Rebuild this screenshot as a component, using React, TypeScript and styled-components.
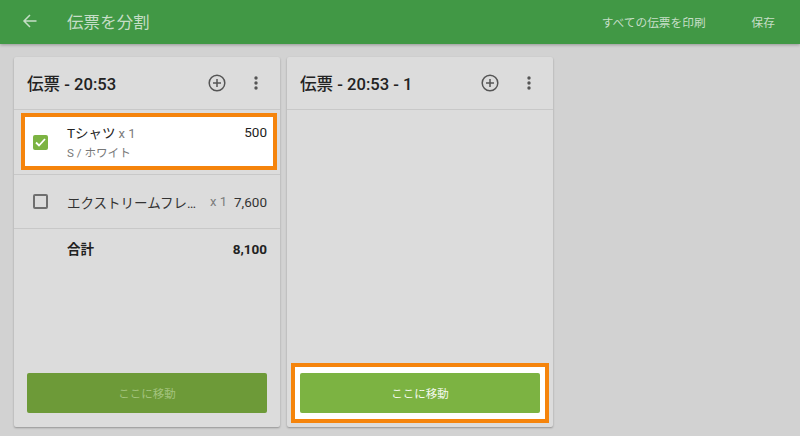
import React from "react";
import styled, { createGlobalStyle } from "styled-components";

const GlobalStyle = createGlobalStyle`
  html, body {
    margin: 0;
    padding: 0;
    background: #d2d2d2;
    font-family: Roboto, "Noto Sans CJK JP", sans-serif;
  }
  * { box-sizing: border-box; }
`;

const Page = styled.div`
  width: 800px;
  height: 436px;
  overflow: hidden;
  background: #d2d2d2;
`;

const TopBar = styled.header`
  height: 44px;
  background: #419845;
  box-shadow: 0 1px 3px rgba(0, 0, 0, 0.28);
  display: flex;
  align-items: center;
  padding: 0 25px 2px 22px;
  color: #c6dec7;
`;

const BackButton = styled.div`
  width: 16px;
  height: 16px;
  display: flex;
  margin-right: 29px;
`;

const PageTitle = styled.div`
  font-size: 16.4px;
  flex: 1;
  letter-spacing: 0.2px;
`;

const BarAction = styled.div`
  font-size: 11.7px;
  margin-left: 46px;
`;

const Columns = styled.main`
  display: flex;
  gap: 7px;
  padding: 13px 0 0 14px;
`;

const Card = styled.section`
  width: 266px;
  height: 370px;
  background: #dcdcdc;
  border-radius: 2px;
  box-shadow: 0 1px 2px rgba(0, 0, 0, 0.3);
  display: flex;
  flex-direction: column;
`;

const CardHeader = styled.div`
  height: 53px;
  flex: none;
  border-bottom: 1px solid #c8c8c8;
  display: flex;
  align-items: center;
  padding: 0 14px 0 13px;
`;

const CardTitle = styled.div`
  flex: 1;
  font-size: 16.6px;
  font-weight: 500;
  color: #222;
`;

const IconSlot = styled.div<{ $gap?: number }>`
  width: 20px;
  height: 20px;
  display: flex;
  align-items: center;
  justify-content: center;
  margin-left: ${(p) => p.$gap ?? 0}px;
`;

const RowFrame = styled.div`
  height: 65px;
  padding: 3px 3px 4px 7px;
  border-bottom: 1px solid #c8c8c8;
`;

const Highlight = styled.div`
  height: 57px;
  border: 4px solid #f5840c;
  background: #fff;
  display: flex;
  align-items: flex-start;
  padding: 2px 6px 0 8px;
`;

const CheckBox = styled.div<{ $checked?: boolean }>`
  width: 15px;
  height: 15px;
  flex: none;
  border-radius: 2px;
  background: ${(p) => (p.$checked ? "#7cb342" : "transparent")};
  border: ${(p) => (p.$checked ? "none" : "2px solid #6f6f6f")};
  display: flex;
  align-items: center;
  justify-content: center;
`;

const CheckSlot = styled.div`
  align-self: center;
  display: flex;
  margin-right: 19px;
`;

const ItemText = styled.div`
  flex: 1;
  min-width: 0;
  padding-top: 4px;
`;

const ItemName = styled.div`
  font-size: 13.5px;
  line-height: 20px;
  color: #222;
  white-space: nowrap;
`;

const Qty = styled.span`
  color: #7c7c7c;
  font-size: 13px;
  margin-left: 3px;
`;

const Variant = styled.div`
  font-size: 11.6px;
  line-height: 16px;
  margin-top: 1px;
  color: #777;
`;

const Price = styled.div`
  font-size: 13.5px;
  line-height: 20px;
  padding-top: 3px;
  color: #222;
`;

const PlainRow = styled.div`
  height: 54px;
  flex: none;
  border-bottom: 1px solid #c8c8c8;
  display: flex;
  align-items: center;
  padding: 0 13px 0 19px;
`;

const PlainName = styled.div`
  flex: 1;
  min-width: 0;
  font-size: 13.5px;
  color: #333;
  white-space: nowrap;
  overflow: hidden;
  text-overflow: ellipsis;
`;

const PlainQty = styled.div`
  color: #7c7c7c;
  font-size: 13px;
  margin: 0 7px 0 13px;
`;

const PlainPrice = styled.div`
  font-size: 13.5px;
  color: #333;
`;

const TotalRow = styled.div`
  display: flex;
  justify-content: space-between;
  padding: 10px 13px 0 53px;
  font-size: 13.5px;
  font-weight: 700;
  line-height: 20px;
  color: #222;
`;

const Spacer = styled.div`
  flex: 1;
`;

const ButtonFrame = styled.div`
  padding: 0 13px 14px;
`;

const MoveButton = styled.div<{ $disabled?: boolean }>`
  height: 40px;
  border-radius: 2px;
  background: ${(p) => (p.$disabled ? "#6d9a38" : "#7cb342")};
  color: ${(p) => (p.$disabled ? "#a3c37d" : "#f4f9ee")};
  font-size: 11.5px;
  display: flex;
  align-items: center;
  justify-content: center;
`;

const ButtonHighlight = styled.div`
  margin: 0 4px 4px;
  height: 60px;
  border: 4px solid #f5840c;
  background: #fff;
  padding: 6px 5px;
`;

const AddIcon = () => (
  <svg width="18" height="18" viewBox="0 0 18 18" fill="none" stroke="#555" strokeWidth="1.5">
    <circle cx="9" cy="9" r="7.8" />
    <path d="M9 5v8M5 9h8" />
  </svg>
);

const MoreIcon = () => (
  <svg width="4" height="14" viewBox="0 0 4 14" fill="#555">
    <circle cx="2" cy="2" r="1.7" />
    <circle cx="2" cy="7" r="1.7" />
    <circle cx="2" cy="12" r="1.7" />
  </svg>
);

const CardActions = () => (
  <>
    <IconSlot>
      <AddIcon />
    </IconSlot>
    <IconSlot $gap={19}>
      <MoreIcon />
    </IconSlot>
  </>
);

const App = () => {
  return (
    <Page>
      <GlobalStyle />
      <TopBar>
        <BackButton>
          <svg width="16" height="16" viewBox="0 0 16 16" fill="none" stroke="#c6dec7" strokeWidth="1.5">
            <path d="M14.5 8H2M8 2L2 8l6 6" />
          </svg>
        </BackButton>
        <PageTitle>伝票を分割</PageTitle>
        <BarAction>すべての伝票を印刷</BarAction>
        <BarAction>保存</BarAction>
      </TopBar>
      <Columns>
        <Card>
          <CardHeader>
            <CardTitle>伝票 - 20:53</CardTitle>
            <CardActions />
          </CardHeader>
          <RowFrame>
            <Highlight>
              <CheckSlot>
                <CheckBox $checked>
                  <svg width="11" height="9" viewBox="0 0 11 9" fill="none" stroke="#fff" strokeWidth="1.8">
                    <path d="M1 4.5l3 3 6-6.5" />
                  </svg>
                </CheckBox>
              </CheckSlot>
              <ItemText>
                <ItemName>
                  Tシャツ<Qty>x 1</Qty>
                </ItemName>
                <Variant>S / ホワイト</Variant>
              </ItemText>
              <Price>500</Price>
            </Highlight>
          </RowFrame>
          <PlainRow>
            <CheckSlot>
              <CheckBox />
            </CheckSlot>
            <PlainName>エクストリームフレーバー</PlainName>
            <PlainQty>x 1</PlainQty>
            <PlainPrice>7,600</PlainPrice>
          </PlainRow>
          <TotalRow>
            <span>合計</span>
            <span>8,100</span>
          </TotalRow>
          <Spacer />
          <ButtonFrame>
            <MoveButton $disabled>ここに移動</MoveButton>
          </ButtonFrame>
        </Card>
        <Card>
          <CardHeader>
            <CardTitle>伝票 - 20:53 - 1</CardTitle>
            <CardActions />
          </CardHeader>
          <Spacer />
          <ButtonHighlight>
            <MoveButton>ここに移動</MoveButton>
          </ButtonHighlight>
        </Card>
      </Columns>
    </Page>
  );
};

export default App;
